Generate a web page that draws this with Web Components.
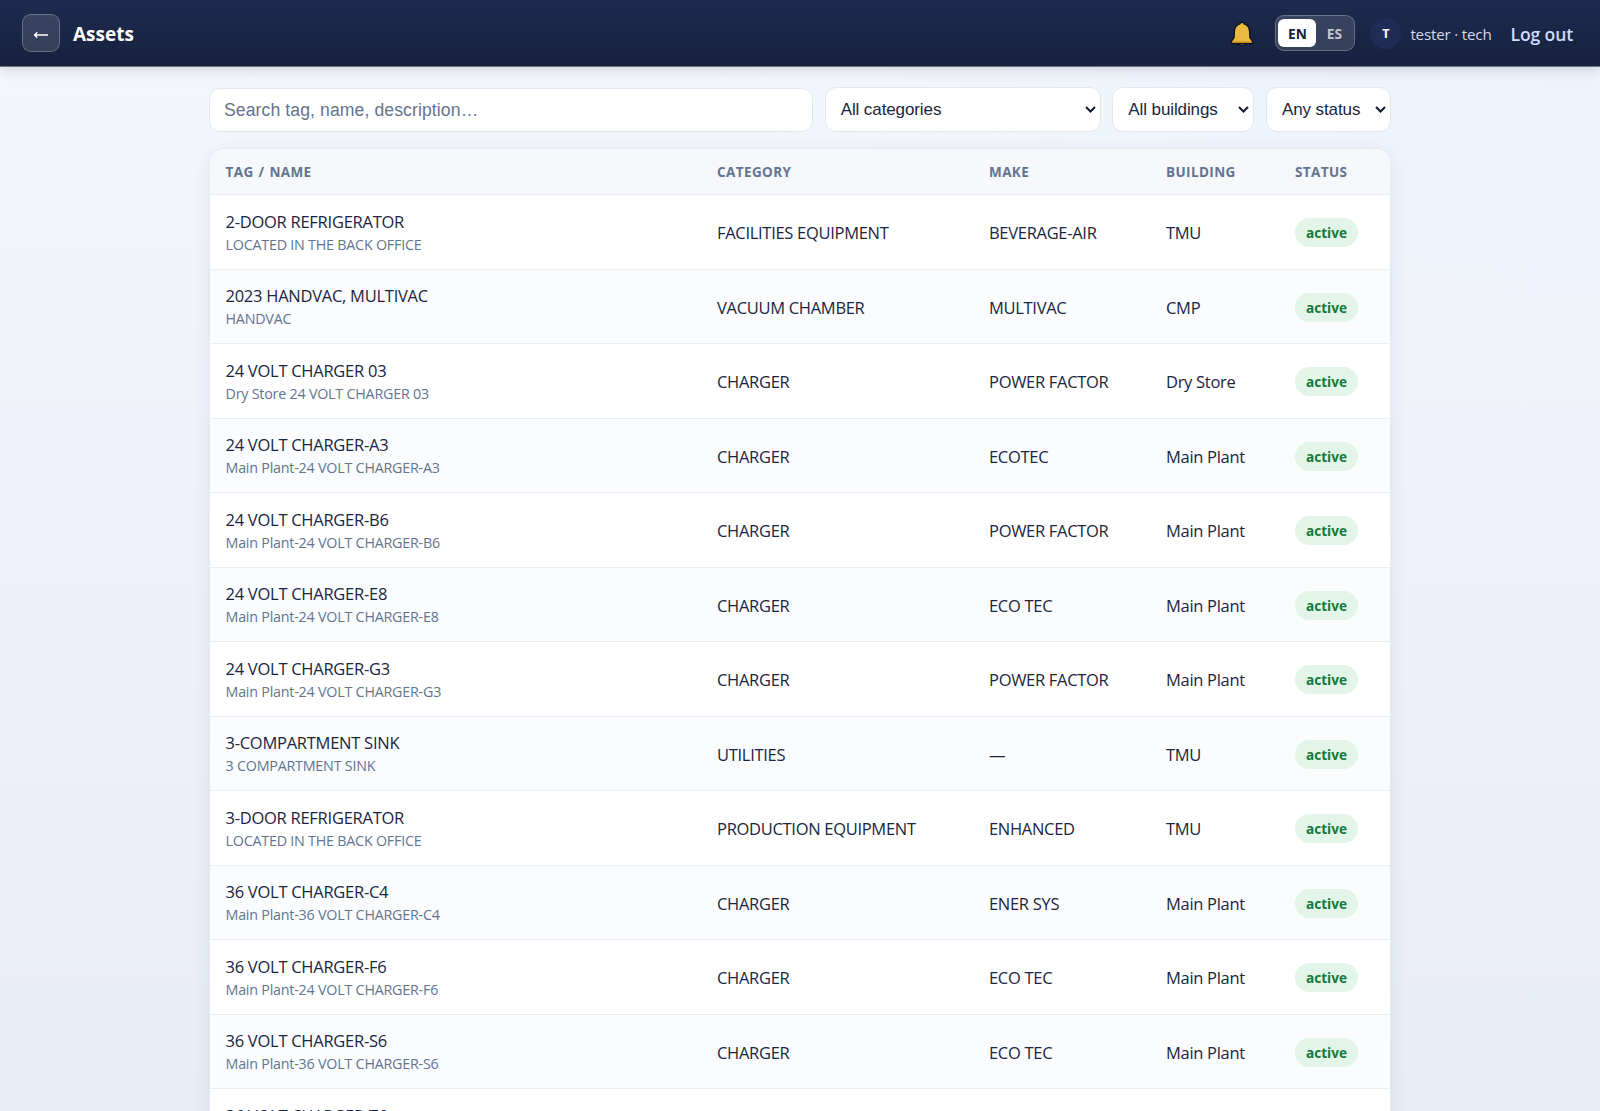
<!DOCTYPE html>
<html lang="en">
<head>
<meta charset="utf-8">
<title>Assets</title>
<style>
    body {
        margin: 0;
        height: 1111px;
        overflow: hidden;
        font-family: "Open Sans", "Noto Sans", sans-serif;
        color: #1a2540;
        background:
            radial-gradient(900px 400px at 100% 0%, rgba(226, 236, 255, .4), transparent),
            linear-gradient(180deg, #f4f7fb 0%, #eff2fa 40%, #e8ecf5 100%);
    }
</style>
</head>
<body>
<asset-page></asset-page>

<script>
class AppHeader extends HTMLElement {
    constructor() {
        super();
        this.attachShadow({mode: 'open'});
    }

    connectedCallback() {
        this.shadowRoot.innerHTML = `
            <style>
                :host {
                    position: relative;
                    display: flex;
                    align-items: center;
                    box-sizing: border-box;
                    height: 67px;
                    padding: 0 27px 0 22px;
                    color: #fff;
                    background: linear-gradient(180deg, #1e2b50, #16213d);
                    border-bottom: 1px solid #6d7388;
                    box-shadow: 0 2px 12px rgba(20, 25, 50, .17);
                }

                .back {
                    display: flex;
                    align-items: center;
                    justify-content: center;
                    box-sizing: border-box;
                    width: 38px;
                    height: 38px;
                    background: rgba(255, 255, 255, .13);
                    border: 1px solid rgba(255, 255, 255, .24);
                    border-radius: 9px;
                }

                .back svg { margin-top: 3px; }

                h1 {
                    flex: 1;
                    margin: 2px 0 0 13px;
                    font-size: 19px;
                    line-height: 26px;
                    font-weight: 700;
                }

                .bell { margin: 2px 21px 0 0; }

                .user {
                    margin: 2px 19px 0 9px;
                    font-size: 15.2px;
                    letter-spacing: -.2px;
                    color: #d5d9e4;
                }

                .avatar {
                    display: flex;
                    align-items: center;
                    justify-content: center;
                    width: 31px;
                    height: 31px;
                    margin-left: 15px;
                    border-radius: 50%;
                    background: #1f2c55;
                    font-size: 12.5px;
                    font-weight: 700;
                }

                .logout {
                    margin-top: 2px;
                    font-size: 17.6px;
                    font-weight: 600;
                    letter-spacing: -.15px;
                    color: #cfdcff;
                }
            </style>
            <div class="back"><svg width="16" height="10" viewBox="0 0 16 10" fill="none" stroke="#fff" stroke-width="1.3"><path d="M15 5H1.5M4.3 2.2L1.5 5L4.3 7.8"/></svg></div>
            <h1><slot></slot></h1>
            <svg class="bell" width="24" height="26" viewBox="0 0 24 26">
                <path d="M9 22.5c.4 1.3 1.5 2 3 2s2.600-.7 3-2Z" fill="#a9672a" stroke="#11141c" stroke-width="1.2"/>
                <path d="M12 1.2c-1.2 0-2 .7-2.2 1.7C6.3 4 4.5 6.8 4.3 10.5L4 16.5L1.5 20.3V22.5H22.5V20.3L20 16.5L19.7 10.5C19.5 6.8 17.7 4 14.2 2.9C14 1.9 13.2 1.2 12 1.2Z" fill="#e8b840" stroke="#11141c" stroke-width="1.5"/>
                <path d="M2.5 20.9H21.5" stroke="#d18f28" stroke-width="1.2"/>
            </svg>
            <lang-switch></lang-switch>
            <div class="avatar">T</div>
            <div class="user">tester · tech</div>
            <div class="logout">Log out</div>
        `;
    }
}

class LangSwitch extends HTMLElement {
    constructor() {
        super();
        this.attachShadow({mode: 'open'});
    }

    connectedCallback() {
        this.shadowRoot.innerHTML = `
            <style>
                :host {
                    display: grid;
                    grid-template-columns: 38px 1fr;
                    box-sizing: border-box;
                    width: 80px;
                    height: 36px;
                    padding: 3px 2px;
                    background: rgba(255, 255, 255, .13);
                    border: 1px solid rgba(255, 255, 255, .24);
                    border-radius: 9px;
                    font-size: 13.7px;
                    font-weight: 700;
                }

                span {
                    display: flex;
                    align-items: center;
                    justify-content: center;
                    color: #c4c7d1;
                    border-radius: 6px;
                }

                .on {
                    color: #16213d;
                    background: #fff;
                }
            </style>
            <span class="on">EN</span><span>ES</span>
        `;
    }
}

class FilterSelect extends HTMLElement {
    constructor() {
        super();
        this.attachShadow({mode: 'open'});
    }

    connectedCallback() {
        this.shadowRoot.innerHTML = `
            <style>
                :host {
                    display: flex;
                    align-items: center;
                    justify-content: space-between;
                    box-sizing: border-box;
                    height: 45px;
                    padding: 0 4px 0 15px;
                    background: #fff;
                    border: 1px solid #e2e8f2;
                    border-radius: 11px;
                    font: 17px "Liberation Sans", sans-serif;
                    letter-spacing: -.1px;
                    white-space: nowrap;
                }
            </style>
            <slot></slot>
            <svg width="11" height="8" viewBox="0 0 11 8" fill="none" stroke="#111a30" stroke-width="2"><path d="M1 1L5.5 5.5L10 1"/></svg>
        `;
    }
}

class StatusPill extends HTMLElement {
    constructor() {
        super();
        this.attachShadow({mode: 'open'});
    }

    connectedCallback() {
        this.shadowRoot.innerHTML = `
            <style>
                :host {
                    display: inline-flex;
                    align-items: center;
                    justify-content: center;
                    width: 63px;
                    height: 29px;
                    border-radius: 15px;
                    background: #e2f5e8;
                    color: #16793a;
                    font-size: 13.6px;
                    font-weight: 700;
                }
            </style>
            <slot></slot>
        `;
    }
}

class AssetRow extends HTMLElement {
    constructor() {
        super();
        this.attachShadow({mode: 'open'});
    }

    connectedCallback() {
        const a = (name) => this.getAttribute(name);
        this.shadowRoot.innerHTML = `
            <style>
                :host {
                    display: grid;
                    grid-template-columns: 491.5px 272px 177px 129px 1fr;
                    align-items: center;
                    box-sizing: border-box;
                    height: 74.5px;
                    padding: 1px 0 0 15.5px;
                    border-bottom: 1px solid #e9eef6;
                    font-size: 16.5px;
                    line-height: 23px;
                    letter-spacing: -.3px;
                    white-space: nowrap;
                }

                small {
                    display: block;
                    font-size: 14.3px;
                    line-height: 23px;
                    letter-spacing: -.22px;
                    color: #64748f;
                }

                .name { letter-spacing: -.26px; }

                status-pill { letter-spacing: 0; }
            </style>
            <div class="name">${a('name')}<small>${a('note')}</small></div>
            <div>${a('category')}</div>
            <div>${a('make')}</div>
            <div>${a('building')}</div>
            <status-pill>active</status-pill>
        `;
    }
}

const ASSETS = [
    ['2-DOOR REFRIGERATOR', 'LOCATED IN THE BACK OFFICE', 'FACILITIES EQUIPMENT', 'BEVERAGE-AIR', 'TMU'],
    ['2023 HANDVAC, MULTIVAC', 'HANDVAC', 'VACUUM CHAMBER', 'MULTIVAC', 'CMP'],
    ['24 VOLT CHARGER 03', 'Dry Store 24 VOLT CHARGER 03', 'CHARGER', 'POWER FACTOR', 'Dry Store'],
    ['24 VOLT CHARGER-A3', 'Main Plant-24 VOLT CHARGER-A3', 'CHARGER', 'ECOTEC', 'Main Plant'],
    ['24 VOLT CHARGER-B6', 'Main Plant-24 VOLT CHARGER-B6', 'CHARGER', 'POWER FACTOR', 'Main Plant'],
    ['24 VOLT CHARGER-E8', 'Main Plant-24 VOLT CHARGER-E8', 'CHARGER', 'ECO TEC', 'Main Plant'],
    ['24 VOLT CHARGER-G3', 'Main Plant-24 VOLT CHARGER-G3', 'CHARGER', 'POWER FACTOR', 'Main Plant'],
    ['3-COMPARTMENT SINK', '3 COMPARTMENT SINK', 'UTILITIES', '—', 'TMU'],
    ['3-DOOR REFRIGERATOR', 'LOCATED IN THE BACK OFFICE', 'PRODUCTION EQUIPMENT', 'ENHANCED', 'TMU'],
    ['36 VOLT CHARGER-C4', 'Main Plant-36 VOLT CHARGER-C4', 'CHARGER', 'ENER SYS', 'Main Plant'],
    ['36 VOLT CHARGER-F6', 'Main Plant-24 VOLT CHARGER-F6', 'CHARGER', 'ECO TEC', 'Main Plant'],
    ['36 VOLT CHARGER-S6', 'Main Plant-36 VOLT CHARGER-S6', 'CHARGER', 'ECO TEC', 'Main Plant'],
    ['36 VOLT CHARGER-T6', '', '', '', '']
];

class AssetTable extends HTMLElement {
    constructor() {
        super();
        this.attachShadow({mode: 'open'});
    }

    connectedCallback() {
        const rows = ASSETS.map(([name, note, category, make, building]) =>
            `<asset-row name="${name}" note="${note || '&amp;nbsp;'}" category="${category}" make="${make}" building="${building}"></asset-row>`
        ).join('');

        this.shadowRoot.innerHTML = `
            <style>
                :host {
                    display: block;
                    overflow: hidden;
                    background: #fff;
                    border-radius: 14px 14px 0 0;
                    box-shadow: 0 0 0 1px #e6eaf3, 0 4px 18px rgba(30, 40, 70, .09);
                }

                .head {
                    display: grid;
                    grid-template-columns: 491.5px 272px 177px 129px 1fr;
                    align-items: center;
                    box-sizing: border-box;
                    height: 46px;
                    padding-left: 15.5px;
                    background: #f6f8fc;
                    border-bottom: 1px solid #e6ebf4;
                    color: #64748f;
                    font-size: 13.5px;
                    font-weight: 700;
                    letter-spacing: .4px;
                    word-spacing: 1px;
                }

                asset-row:nth-of-type(even) { background: #fafcfe; }
            </style>
            <div class="head"><span>TAG / NAME</span><span>CATEGORY</span><span>MAKE</span><span>BUILDING</span><span>STATUS</span></div>
            ${rows}
        `;
    }
}

class AssetPage extends HTMLElement {
    constructor() {
        super();
        this.attachShadow({mode: 'open'});
    }

    connectedCallback() {
        this.shadowRoot.innerHTML = `
            <style>
                :host { display: block; }

                main {
                    width: 1180px;
                    margin: 0 auto;
                    padding-top: 20px;
                }

                .filters {
                    display: grid;
                    grid-template-columns: 604px 276px 142px 125px;
                    justify-content: space-between;
                    align-items: end;
                    margin: 0 -1px 17.3px;
                }

                input {
                    box-sizing: border-box;
                    height: 44px;
                    padding: 0 14px;
                    background: #fff;
                    border: 1px solid #e2e8f2;
                    border-radius: 11px;
                    font: 17.6px "Liberation Sans", sans-serif;
                    letter-spacing: .1px;
                }

                input::placeholder { color: #64748f; }
            </style>
            <app-header>Assets</app-header>
            <main>
                <div class="filters">
                    <input placeholder="Search tag, name, description…">
                    <filter-select>All categories</filter-select>
                    <filter-select>All buildings</filter-select>
                    <filter-select>Any status</filter-select>
                </div>
                <asset-table></asset-table>
            </main>
        `;
    }
}

customElements.define('lang-switch', LangSwitch);
customElements.define('app-header', AppHeader);
customElements.define('filter-select', FilterSelect);
customElements.define('status-pill', StatusPill);
customElements.define('asset-row', AssetRow);
customElements.define('asset-table', AssetTable);
customElements.define('asset-page', AssetPage);
</script>
</body>
</html>
